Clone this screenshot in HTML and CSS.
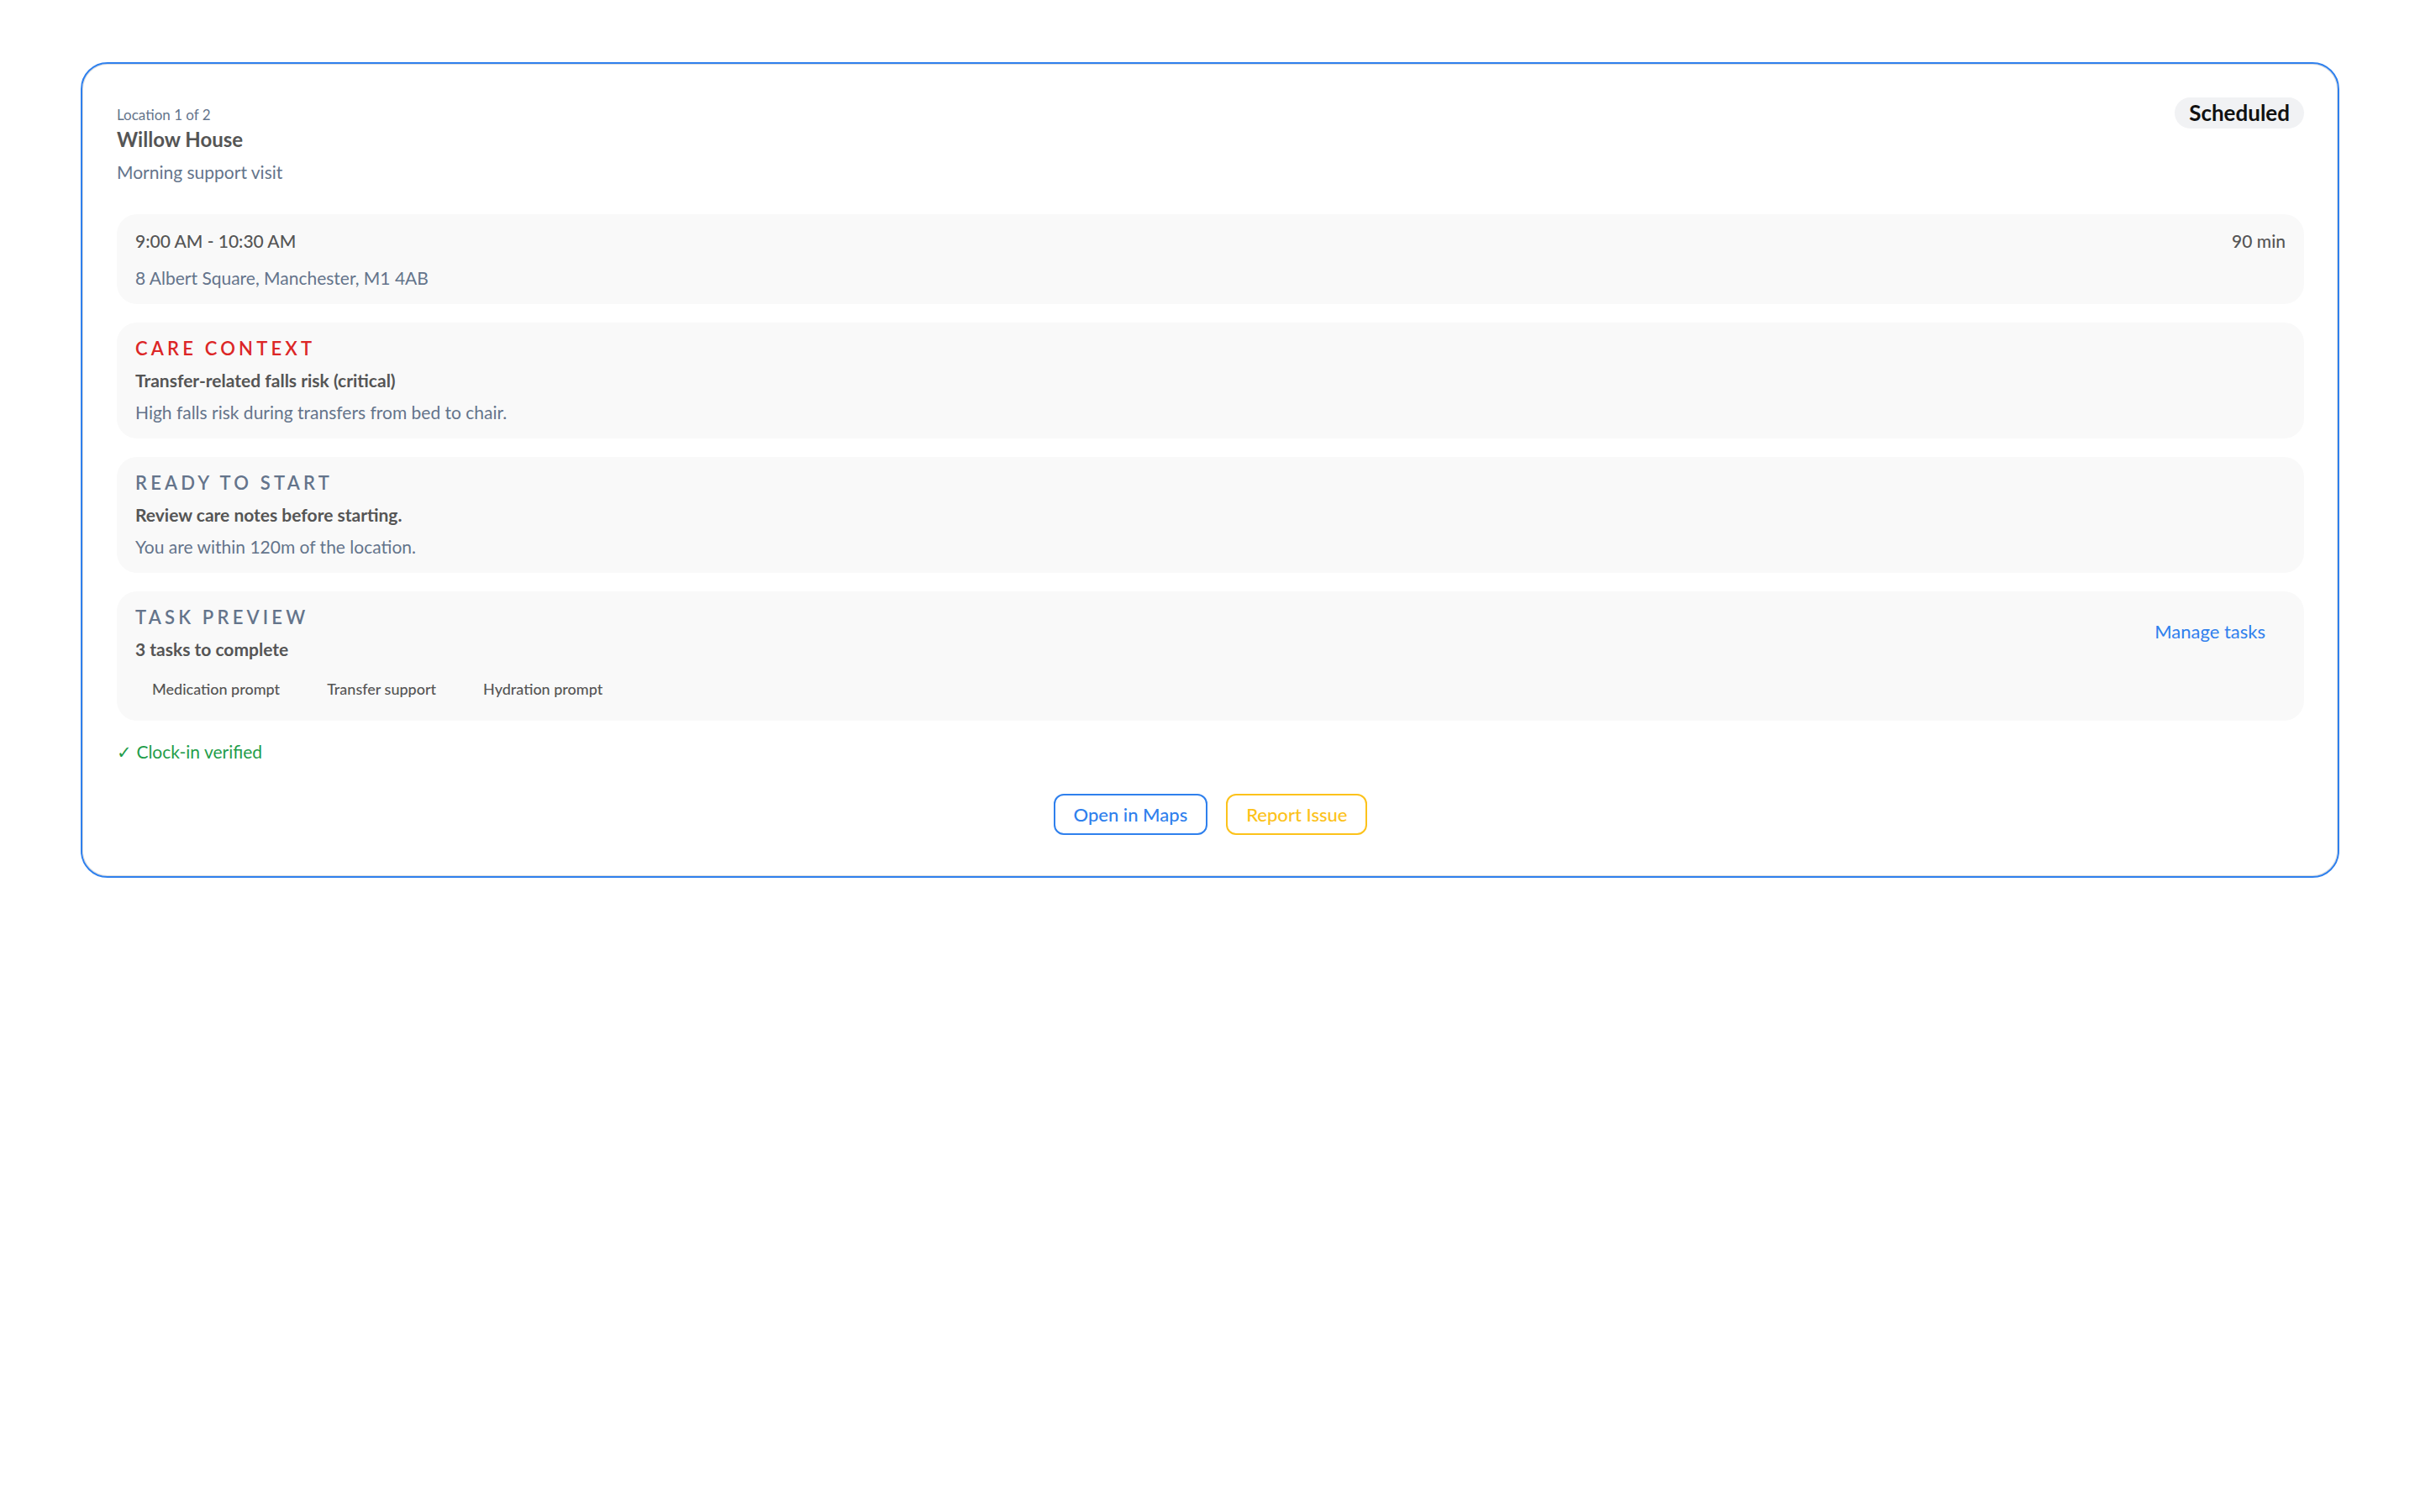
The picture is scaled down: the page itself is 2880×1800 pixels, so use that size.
FILE: index.html
```html
<!DOCTYPE html>
<html lang="en">
<head>
    <meta charset="UTF-8">
    <meta name="viewport" content="width=device-width, initial-scale=1.0">
    <title>Visit</title>
    <link rel="stylesheet" href="styles.css">
</head>

<body>
    <div class="visitCard">

        <!-- intestazione -->
        <div class="visitHeader">
            <div class="visitTitle">
                <div class="visitCount">Location 1 of 2</div>
                <div class="visitName">Willow House</div>
                <div class="visitType">Morning support visit</div>
            </div>
            <span class="statusPill">Scheduled</span>
        </div>

        <div class="panel">
            <div class="timeRow">
                <span class="timeText">9:00 AM - 10:30 AM</span>
                <span class="timeText">90 min</span>
            </div>
            <div class="address">8 Albert Square, Manchester, M1 4AB</div>
        </div>

        <div class="panel">
            <div class="panelLabel labelRed">CARE CONTEXT</div>
            <div class="panelStrong">Transfer-related falls risk (critical)</div>
            <div class="panelText">High falls risk during transfers from bed to chair.</div>
        </div>

        <div class="panel">
            <div class="panelLabel">READY TO START</div>
            <div class="panelStrong">Review care notes before starting.</div>
            <div class="panelText">You are within 120m of the location.</div>
        </div>

        <div class="panel taskPanel">
            <div class="taskInfo">
                <div class="panelLabel">TASK PREVIEW</div>
                <div class="panelStrong">3 tasks to complete</div>
                <div class="chips">
                    <span class="chip">Medication prompt</span>
                    <span class="chip">Transfer support</span>
                    <span class="chip">Hydration prompt</span>
                </div>
            </div>
            <button class="linkButton" type="button">Manage tasks</button>
        </div>

        <div class="verified">&#10003; Clock-in verified</div>

        <div class="actions">
            <button class="buttonMaps" type="button">Open in Maps</button>
            <button class="buttonIssue" type="button">Report Issue</button>
        </div>
    </div>
</body>
</html>
```

FILE: styles.css
```css
body {
    margin: 0;
    padding: 74px 96px;
    background: white;
    font-family: "Lato", "Liberation Sans", sans-serif;
    color: #555555;
}

.visitCard {
    display: flex;
    flex-direction: column;
    gap: 22px;
    padding: 40px 40px 40px 41px;
    border: 2px solid #2f80ed;
    border-radius: 32px;
    box-shadow: inset 0 0 0 1px #dddddd;
}

.visitHeader {
    display: flex;
    justify-content: space-between;
    align-items: flex-start;
    padding-bottom: 13px;
}

.visitTitle {
    padding-top: 7px;
}

.visitCount {
    font-size: 17px;
    line-height: 27px;
    color: #64748b;
}

.visitName {
    font-size: 24px;
    line-height: 31px;
    font-weight: 700;
    color: #555555;
}

.visitType {
    margin-top: 9px;
    font-size: 21px;
    line-height: 30px;
    color: #64748b;
}

.statusPill {
    padding: 3px 17px;
    border-radius: 20px;
    background-color: #f1f2f4;
    color: #111111;
    font-size: 26px;
    line-height: 31px;
    font-weight: 700;
}

.panel {
    padding: 17px 22px 16px;
    border-radius: 24px;
    background-color: #f9f9f9;
}

.timeRow {
    display: flex;
    justify-content: space-between;
}

.timeText {
    font-size: 21px;
    line-height: 30px;
    font-weight: 500;
    color: #555555;
}

.address {
    margin-top: 14px;
    font-size: 21px;
    line-height: 30px;
    color: #64748b;
}

.panelLabel {
    font-size: 22px;
    line-height: 28px;
    font-weight: 600;
    letter-spacing: 0.19em;
    color: #64748b;
}

.labelRed {
    color: #dc2626;
}

.panelStrong {
    margin-top: 9px;
    font-size: 21px;
    line-height: 30px;
    font-weight: 700;
    color: #555555;
}

.panelText {
    margin-top: 8px;
    font-size: 21px;
    line-height: 30px;
    color: #64748b;
}

.taskPanel {
    display: flex;
    justify-content: space-between;
    align-items: flex-start;
}

.chips {
    display: flex;
    gap: 16px;
    margin-top: 11px;
}

.chip {
    padding: 8px 20px;
    font-size: 18px;
    line-height: 27px;
    font-weight: 500;
    color: #555555;
}

.linkButton {
    margin-top: 15px;
    padding: 0 24px;
    border: none;
    background: none;
    font-family: inherit;
    font-size: 22px;
    line-height: 31px;
    color: #2f80ed;
}

.verified {
    font-size: 21px;
    line-height: 30px;
    color: #1f9d4a;
}

.actions {
    display: flex;
    justify-content: center;
    gap: 22px;
    margin: 13px 0 9px;
}

.buttonMaps, .buttonIssue {
    padding: 6px 22px;
    border: 2px solid #2f80ed;
    border-radius: 12px;
    background: white;
    font-family: inherit;
    font-size: 22px;
    line-height: 33px;
    font-weight: 500;
    color: #2f80ed;
}

.buttonIssue {
    border-color: #fcc21b;
    color: #fcc21b;
}
```
